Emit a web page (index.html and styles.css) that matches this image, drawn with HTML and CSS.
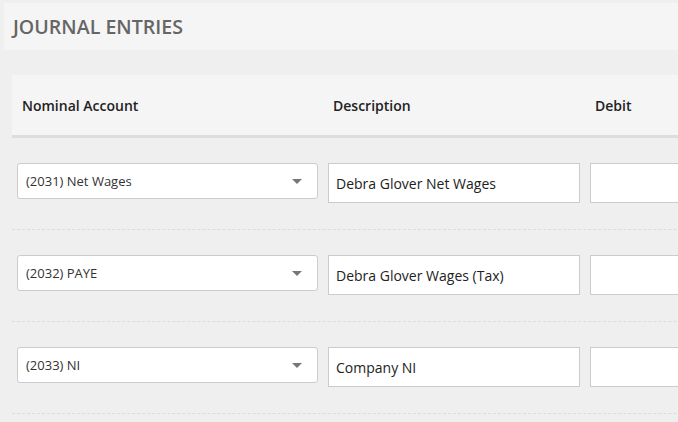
FILE: index.html
```html
<!DOCTYPE html>
<html>
<head>
<meta charset="utf-8">
<link rel="stylesheet" href="styles.css">
</head>
<body>
<div class="page">
  <div class="title-bar"><h1 class="title">JOURNAL ENTRIES</h1></div>
  <div class="table">
    <div class="row head">
      <div class="cell c1">Nominal Account</div>
      <div class="cell c2">Description</div>
      <div class="cell c3">Debit</div>
    </div>
    <div class="row body">
      <div class="cell c1"><div class="select"><span>(2031) Net Wages</span><span class="caret"></span></div></div>
      <div class="cell c2"><div class="input">Debra Glover Net Wages</div></div>
      <div class="cell c3"><div class="input"></div></div>
    </div>
    <div class="row body">
      <div class="cell c1"><div class="select"><span>(2032) PAYE</span><span class="caret"></span></div></div>
      <div class="cell c2"><div class="input">Debra Glover Wages (Tax)</div></div>
      <div class="cell c3"><div class="input"></div></div>
    </div>
    <div class="row body">
      <div class="cell c1"><div class="select"><span>(2033) NI</span><span class="caret"></span></div></div>
      <div class="cell c2"><div class="input">Company NI</div></div>
      <div class="cell c3"><div class="input"></div></div>
    </div>
  </div>
</div>
</body>
</html>
```
FILE: styles.css
```css
html, body {
  margin: 0;
  padding: 0;
  background: #efefef;
  font-family: "Open Sans", "Liberation Sans", sans-serif;
  overflow: hidden;
  width: 678px;
  height: 422px;
}
.page {
  padding: 3px 0 0 4px;
  width: 674px;
  overflow: hidden;
}
.title-bar {
  background: #f5f5f5;
  height: 47px;
  display: flex;
  align-items: center;
  padding-left: 9px;
  width: 900px;
}
.title {
  margin: 0;
  font-size: 19.6px;
  font-weight: 600;
  color: #666666;
}
.table {
  margin: 25px 0 0 8px;
  width: 900px;
}
.row {
  display: flex;
}
.head {
  background: #f5f5f5;
  height: 60px;
  align-items: center;
  border-bottom: 3px solid #dddddd;
}
.head .cell {
  padding: 0 10px;
  font-size: 14px;
  font-weight: 600;
  color: #222222;
}
.body {
  padding: 25px 0 26px;
  border-bottom: 1px dashed #dcdcdc;
  align-items: flex-start;
}
.body .cell {
  padding: 0 5px;
}
.c1 { width: 311px; box-sizing: border-box; }
.c2 { width: 262px; box-sizing: border-box; }
.c3 { width: 200px; box-sizing: border-box; }
.select {
  box-sizing: border-box;
  height: 36px;
  background: #fff;
  border: 1px solid #cccccc;
  border-radius: 3px;
  display: flex;
  align-items: center;
  justify-content: space-between;
  padding: 0 15px 0 8px;
  font-size: 13px;
  color: #333333;
}
.caret {
  width: 0;
  height: 0;
  border-left: 5px solid transparent;
  border-right: 5px solid transparent;
  border-top: 5px solid #777777;
}
.input {
  box-sizing: border-box;
  height: 40px;
  background: #fff;
  border: 1px solid #cccccc;
  display: flex;
  align-items: center;
  padding: 0 7px;
  font-size: 14px;
  color: #222222;
}
```
